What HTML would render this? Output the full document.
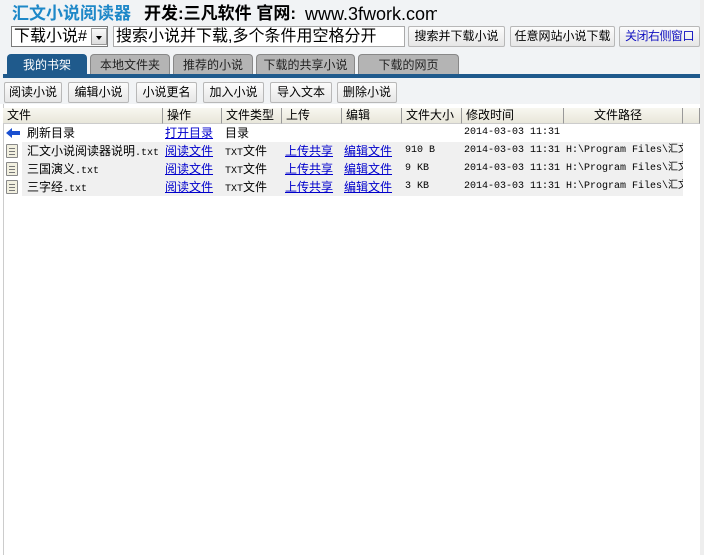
<!DOCTYPE html>
<html><head><meta charset="utf-8"><style>
*{margin:0;padding:0;box-sizing:border-box}
body{width:704px;height:555px;background:#fff;position:relative;overflow:hidden;font-family:"Liberation Sans","Noto Sans CJK SC",sans-serif;font-size:12px;color:#000}
.top{position:absolute;left:0;top:0;width:704px;height:104px;background:#f1f3f5}
.a{position:absolute;white-space:nowrap}
.btn{position:absolute;background:linear-gradient(#fcfcfc,#e6e6e6);border:1px solid #b8b8b8;border-radius:2px;font-size:12px;text-align:center;line-height:18px;height:21px;white-space:nowrap;overflow:hidden}
.tab{position:absolute;top:54px;height:21px;background:#b4b4b4;border:1px solid #888;border-bottom:none;border-radius:4px 4px 0 0;text-align:center;line-height:20px;font-size:12px;color:#222}
.hd{position:absolute;top:108px;height:16px;background:linear-gradient(#f8f7f0,#e8e6da);border-right:1px solid #999;border-bottom:1px solid #ccc;line-height:15px;padding-left:4px;font-size:12px}
.row{position:absolute;left:22px;width:661px;height:18px}
.c{position:absolute;line-height:18px;font-size:12px;white-space:nowrap}
.m{font-family:"Liberation Mono","Noto Sans CJK SC",monospace;font-size:10px}
a{color:#0000cc;text-decoration:underline}
.ic{position:absolute;left:6px;width:12px;height:14px;border:1px solid #888;background:#f2f0e0;border-radius:1px}
.ic i{position:absolute;left:2px;width:6px;height:1px;background:#777}
</style></head><body>
<div class="top"></div>
<div style="position:absolute;left:700px;top:0;width:4px;height:555px;background:#eee"></div>
<div class="a" style="left:12px;top:3px;font-size:17px;font-weight:bold;line-height:22px;color:#1e88c8">汇文小说阅读器</div>
<div class="a" style="left:144px;top:3px;font-size:17px;font-weight:bold;line-height:22px">开发:三凡软件 官网:</div>
<div class="a" style="left:305px;top:3px;font-size:18px;line-height:22px;width:132px;overflow:hidden">www.3fwork.com</div>
<div class="a" style="left:11px;top:26px;width:97px;height:21px;background:#fff;border:1px solid #7a7a7a;font-size:16px;line-height:19px;padding-left:2px">下载小说#</div>
<div class="a" style="left:91px;top:28px;width:16px;height:17px;background:linear-gradient(#fafafa,#ddd);border:1px solid #999"><div style="position:absolute;left:4px;top:7px;border-left:3px solid transparent;border-right:3px solid transparent;border-top:4px solid #000"></div></div>
<div class="a" style="left:113px;top:26px;width:292px;height:21px;background:#fff;border:1px solid #aaa;font-size:16px;line-height:19px;padding-left:2px">搜索小说并下载,多个条件用空格分开</div>
<div class="btn" style="left:408px;top:26px;width:97px">搜索并下载小说</div>
<div class="btn" style="left:510px;top:26px;width:105px">任意网站小说下载</div>
<div class="btn" style="left:619px;top:26px;width:81px;color:#1010c0;letter-spacing:-0.5px"><span style="color:#1010c0">关闭右侧窗口</span></div>
<div class="tab" style="left:7px;width:80px;background:#1f5a8c;border-color:#1f5a8c;color:#fff">我的书架</div>
<div class="tab" style="left:90px;width:80px">本地文件夹</div>
<div class="tab" style="left:173px;width:80px">推荐的小说</div>
<div class="tab" style="left:256px;width:99px">下载的共享小说</div>
<div class="tab" style="left:358px;width:101px">下载的网页</div>
<div style="position:absolute;left:3px;top:74px;width:697px;height:4px;background:#1f5a8c"></div>
<div class="btn" style="left:4px;top:82px;width:58px">阅读小说</div>
<div class="btn" style="left:68px;top:82px;width:61px">编辑小说</div>
<div class="btn" style="left:136px;top:82px;width:61px">小说更名</div>
<div class="btn" style="left:203px;top:82px;width:61px">加入小说</div>
<div class="btn" style="left:270px;top:82px;width:62px">导入文本</div>
<div class="btn" style="left:337px;top:82px;width:60px">删除小说</div>
<div style="position:absolute;left:3px;top:104px;width:1px;height:451px;background:#ccc"></div>
<div class="hd" style="left:3px;width:160px">文件</div>
<div class="hd" style="left:163px;width:59px">操作</div>
<div class="hd" style="left:222px;width:60px">文件类型</div>
<div class="hd" style="left:282px;width:60px">上传</div>
<div class="hd" style="left:342px;width:60px">编辑</div>
<div class="hd" style="left:402px;width:60px">文件大小</div>
<div class="hd" style="left:462px;width:102px">修改时间</div>
<div class="hd" style="left:564px;width:119px;padding-left:30px">文件路径</div>
<div class="hd" style="left:683px;width:17px"></div>

<div class="row" style="top:124px"></div>
<svg class="a" style="left:5px;top:127px" width="16" height="12"><path d="M1 6 L7 1 L7 4 L15 4 L15 8 L7 8 L7 11 Z" fill="#1a4fd0"/></svg>
<div class="c" style="left:27px;top:124px">刷新目录</div>
<div class="c" style="left:165px;top:124px"><a>打开目录</a></div>
<div class="c" style="left:225px;top:124px">目录</div>
<div class="c m" style="left:464px;top:124px">2014-03-03 11:31</div>

<div class="row" style="top:142px;background:#f0f0f0"></div>
<div class="row" style="top:160px;background:#f0f0f0"></div>
<div class="row" style="top:178px;background:#f0f0f0"></div>

<div class="ic" style="top:144px"><i style="top:3px"></i><i style="top:6px"></i><i style="top:9px"></i></div>
<div class="ic" style="top:162px"><i style="top:3px"></i><i style="top:6px"></i><i style="top:9px"></i></div>
<div class="ic" style="top:180px"><i style="top:3px"></i><i style="top:6px"></i><i style="top:9px"></i></div>

<div class="c" style="left:27px;top:142px">汇文小说阅读器说明<span class="m">.txt</span></div>
<div class="c" style="left:27px;top:160px">三国演义<span class="m">.txt</span></div>
<div class="c" style="left:27px;top:178px">三字经<span class="m">.txt</span></div>
<div class="c" style="left:165px;top:142px"><a>阅读文件</a></div>
<div class="c" style="left:165px;top:160px"><a>阅读文件</a></div>
<div class="c" style="left:165px;top:178px"><a>阅读文件</a></div>
<div class="c" style="left:225px;top:142px"><span class="m">TXT</span>文件</div>
<div class="c" style="left:225px;top:160px"><span class="m">TXT</span>文件</div>
<div class="c" style="left:225px;top:178px"><span class="m">TXT</span>文件</div>
<div class="c" style="left:285px;top:142px"><a>上传共享</a></div>
<div class="c" style="left:285px;top:160px"><a>上传共享</a></div>
<div class="c" style="left:285px;top:178px"><a>上传共享</a></div>
<div class="c" style="left:344px;top:142px"><a>编辑文件</a></div>
<div class="c" style="left:344px;top:160px"><a>编辑文件</a></div>
<div class="c" style="left:344px;top:178px"><a>编辑文件</a></div>
<div class="c m" style="left:405px;top:142px">910 B</div>
<div class="c m" style="left:405px;top:160px">9 KB</div>
<div class="c m" style="left:405px;top:178px">3 KB</div>
<div class="c m" style="left:464px;top:142px;width:219px;overflow:hidden">2014-03-03 11:31 H:\Program Files\汇文</div>
<div class="c m" style="left:464px;top:160px;width:219px;overflow:hidden">2014-03-03 11:31 H:\Program Files\汇文</div>
<div class="c m" style="left:464px;top:178px;width:219px;overflow:hidden">2014-03-03 11:31 H:\Program Files\汇文</div>
</body></html>
